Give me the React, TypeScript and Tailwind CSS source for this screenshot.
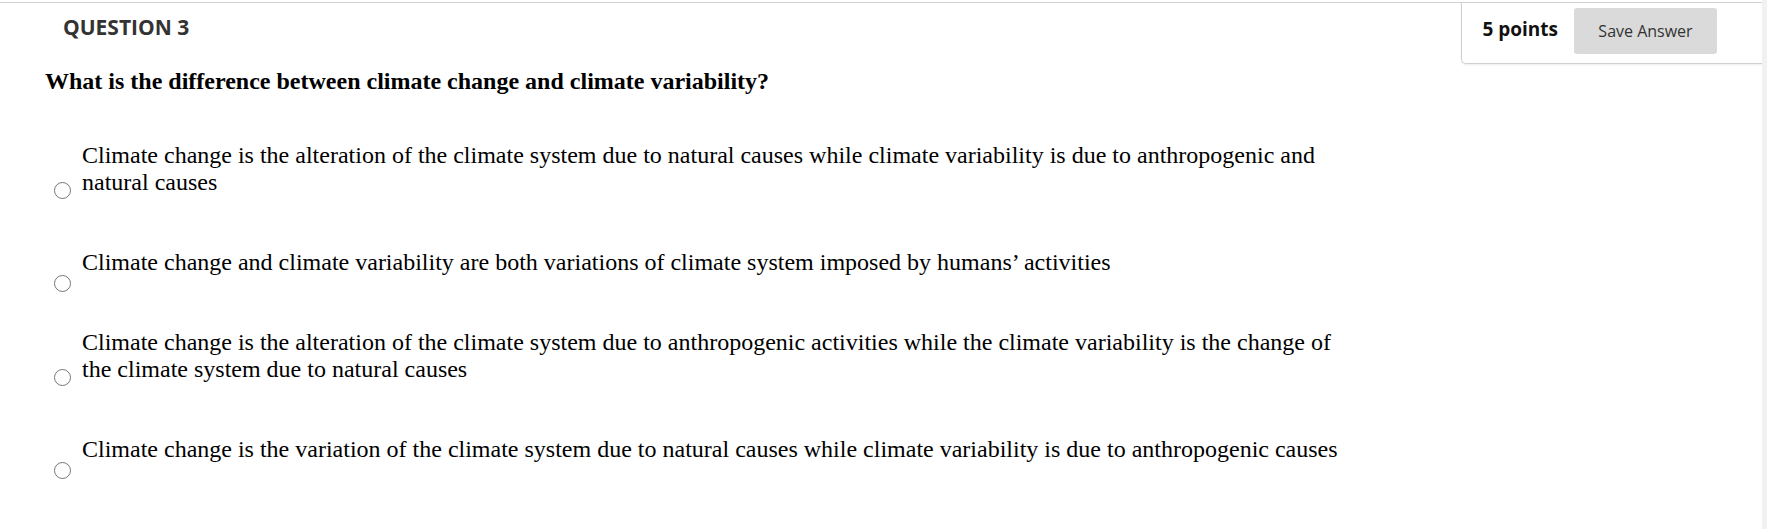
import React from "react";

const options = [
  "Climate change is the alteration of the climate system due to natural causes while climate variability is due to anthropogenic and natural causes",
  "Climate change and climate variability are both variations of climate system imposed by humans\u2019 activities",
  "Climate change is the alteration of the climate system due to anthropogenic activities while the climate variability is the change of the climate system due to natural causes",
  "Climate change is the variation of the climate system due to natural causes while climate variability is due to anthropogenic causes",
];

export default function App() {
  return (
    <div className="flex w-full h-[529px] bg-white overflow-hidden">
      <div className="flex-1 flex flex-col">
        <div className="mt-[2px] border-t border-[#d2d2d2]" />
        <div className="flex justify-between h-[61px]">
          <div
            className="pl-[63px] pt-[10px] text-[21px] leading-[28px] font-bold text-[#333333]"
            style={{ fontFamily: '"Open Sans", sans-serif' }}
          >
            QUESTION 3
          </div>
          <div
            className="flex items-start h-[61px] border-l border-b border-[#d0d0d0] rounded-bl-[5px] pl-[20px] pr-[45px] shadow-[0_1px_2px_rgba(0,0,0,0.08)]"
            style={{ fontFamily: '"Open Sans", sans-serif' }}
          >
            <span className="mt-[13px] text-[19px] leading-[26px] font-bold text-[#111111]">
              5 points
            </span>
            <button className="ml-[16px] mt-[5px] h-[46px] w-[143px] rounded-[3px] bg-[#dadada] text-[16px] text-[#333333] flex items-center justify-center">
              Save Answer
            </button>
          </div>
        </div>
        <p
          className="pl-[45px] mt-[4px] text-[24px] leading-[27px] font-bold text-black"
          style={{ fontFamily: '"Liberation Serif", "Times New Roman", serif' }}
        >
          What is the difference between climate change and climate variability?
        </p>
        <div
          className="mt-[47px] flex flex-col gap-[11px] pl-[54px]"
          style={{ fontFamily: '"Liberation Serif", "Times New Roman", serif' }}
        >
          {options.map((o, i) => (
            <div key={i} className="flex items-center">
              <span className="shrink-0 w-[17px] h-[17px] rounded-full border-[1.5px] border-[#767676] bg-white" />
              <div className="ml-[11px] w-[1270px] pb-[42px] text-[24px] leading-[27px] text-black">
                {o}
              </div>
            </div>
          ))}
        </div>
      </div>
      <div className="w-[5px] h-full bg-[#f1f1f1]" />
    </div>
  );
}
